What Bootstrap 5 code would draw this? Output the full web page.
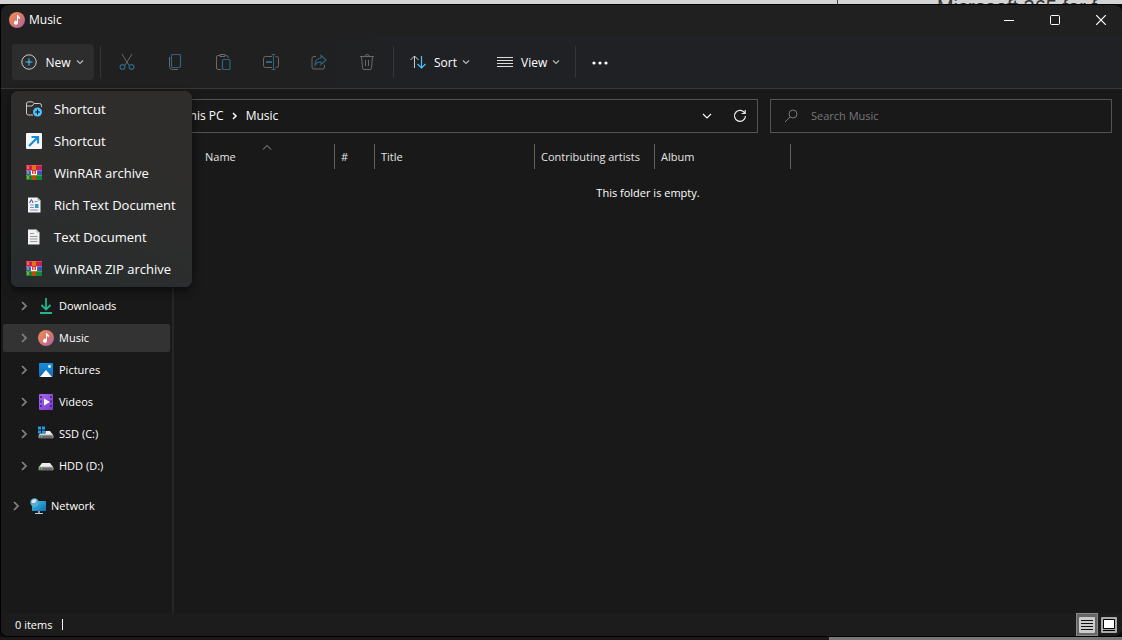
<!DOCTYPE html>
<html lang="en" data-bs-theme="dark">
<head>
<meta charset="utf-8">
<meta name="viewport" content="width=device-width, initial-scale=1">
<title>Music</title>
<link href="https://cdn.jsdelivr.net/npm/bootstrap@5.3.0/dist/css/bootstrap.min.css" rel="stylesheet">
<style>
body{font-family:"Open Sans","Noto Sans",sans-serif;font-size:12px;line-height:16px;color:#fff;background:#0c0b0c}
svg{display:block;flex:none}
button{font-family:inherit}
.desk-top{height:4px;background:#d4d4d4;color:#333;overflow:hidden;padding-right:25px}
.desk-top span{font-family:"Liberation Sans",sans-serif;font-size:20px;line-height:15px;white-space:nowrap}
.desk-top .edge{width:1px;background:#444;margin-right:99px}
.desk-low{height:3px;background:linear-gradient(90deg,#1c1818 0 829px,#777 829px)}
.win{background:#191919;border:1px solid #000;border-right:0;border-radius:8px;overflow:hidden}
.bar-title{height:30px;padding-left:8px;background:#202020}
.tool{height:54px;padding:0 11px;background:linear-gradient(90deg,#202020 25%,#202124 35%);border-bottom:1px solid #3a3739}
.flat{background:none;border:0;color:inherit;padding:0;display:flex;align-items:center;justify-content:center}
.capt{width:42px;height:30px}
.tbtn{height:36px;font-size:12px;font-weight:500;border-radius:4px;color:#fff}
.tbtn span{padding:2px 4px 0 8px}
.tbtn .drop{color:#bbb}
.new-btn{background:#2d2d2d;width:82px}
.sort-btn{margin-left:16px}
.view-btn{margin-left:26px}
.more-btn{margin-left:16px}
.ico-btn{width:48px;height:36px}
.sep-v{width:1px;height:32px;background:#363636}
.sep-a{margin:0 2px 0 6px}
.sep-b{margin-left:2px}
.sep-c{margin-left:14px}
.new-menu{--bs-dropdown-min-width:181px;top:47px;left:-1px;padding:2px 0;border:0;border-radius:7px;background:linear-gradient(200deg,#2e2d2c 30%,#2c2d2d 65%,#272c2e);box-shadow:0 4px 10px #0008;z-index:10}
.new-menu .dropdown-item{height:32px;padding:0 14px;gap:11px;font-size:13px;color:#fff}
.nav-row{padding:10px 10px 0 134px;gap:12px}
.addr{height:34px;border:1px solid #535353;background:#191919}
.crumb{margin-left:47px}
.addr .recent{margin-right:19px}
.addr .reload{margin-right:9px}
.find{flex:0 1 342px}
.find input{background:none;border:0;outline:0;color:#fff;font-size:11px;min-width:0}
.find input::placeholder{color:#777;opacity:1}
.side{width:173px;padding:159px 2px 0 2px;border-right:2px solid #262626;font-size:11px}
.side a{height:28px;color:#fff;text-decoration:none;gap:5px;padding-left:17px;border-radius:2px}
.side .sel{background:#333}
.side .chev{margin-right:5px}
.side .top-lvl{padding-left:9px;margin-top:8px}
.pane{font-size:11px;padding-top:11px}
.cols{table-layout:fixed;width:616px}
.cols th{font-weight:400;padding:0;height:25px;color:#e4e4e4}
.cols span{display:block;height:25px;line-height:25px;padding-left:6px;border-right:1px solid #636363;white-space:nowrap}
.cols .first{padding-left:31px;position:relative}
.cols .first svg{position:absolute;left:88px;top:0}
.stat{height:23px;background:#1c1c1c;font-size:11px;padding:0 2px 0 14px}
.stat .tick{width:1px;height:11px;background:#fff;margin-left:10px}
.vbtn{width:22px;height:23px}
.vbtn.on{background:#666;border:1px solid #888}
</style>
</head>
<body class="vh-100 d-flex flex-column overflow-hidden">
<svg width="0" height="0" class="position-absolute" aria-hidden="true">
<defs>
<linearGradient id="gm" x1="0" y1="0" x2="1" y2="1"><stop offset="0" stop-color="#f09050"/><stop offset=".5" stop-color="#d9776c"/><stop offset="1" stop-color="#a65fb0"/></linearGradient>
<linearGradient id="gp" x1="0" y1="0" x2="0" y2="1"><stop offset="0" stop-color="#1a90dc"/><stop offset="1" stop-color="#0d6bbd"/></linearGradient>
<linearGradient id="gv" x1="0" y1="0" x2="1" y2="1"><stop offset="0" stop-color="#a767ee"/><stop offset="1" stop-color="#7a3bd0"/></linearGradient>
<linearGradient id="gn" x1="0" y1="0" x2="1" y2="1"><stop offset="0" stop-color="#3cc4ee"/><stop offset="1" stop-color="#0e6fae"/></linearGradient>
</defs>
<symbol id="music" viewBox="0 0 16 16"><circle cx="8" cy="8" r="8" fill="url(#gm)"/><path d="M8 3h1q.2 1.300 2 2.200v1.800q-1.200-.300-2-1V10.500A2 2 0 1 1 8 9z" fill="#fff"/></symbol>
<symbol id="down" viewBox="0 0 10 6"><path d="M2 1.500l3 3 3-3" fill="none" stroke="currentColor" stroke-width="1.100"/></symbol>
<symbol id="right" viewBox="0 0 8 10"><path d="M2 1l4 4-4 4" fill="none" stroke="#858585" stroke-width="1.700"/></symbol>
<symbol id="rar" viewBox="0 0 16 16"><path d="M0 1h16v4H0z" fill="#c81f50"/><path d="M0 6h16v4H0z" fill="#4553b5"/><path d="M0 11h16v4H0z" fill="#15852f"/><path d="M0 0h16v1H0z" fill="#e64370"/><path d="M0 5h16v1H0z" fill="#7679d4"/><path d="M0 10h16v1H0z" fill="#35aa45"/><path d="M6 0h4v15H6z" fill="#e8701c"/><path d="M6 11h4v4H6z" fill="#bd4b0d"/><path d="M5 5h6v5H5z" fill="#d62b22"/><path d="M5.500 5.500v4h5v-4M8 6v3" fill="none" stroke="#fff" stroke-width="1.200"/><path d="M2 1v3M2 6v3M2 11v3" stroke="#ffcb3c"/></symbol>
<symbol id="drive" viewBox="0 0 16 16"><path d="M4 5h8l3 4H1z" fill="#ededed"/><path d="M1 9h14v3.500H1z" fill="#6a6a6a"/><path d="M1 9h14M1 9v3M15 9v3" stroke="#bbb" stroke-width=".8"/><path d="M3 10h1.300v1.300H3z" fill="#3be33b"/></symbol>
</svg>

<div class="desk-top d-flex justify-content-end"><div class="edge"></div><span>Microsoft 365 for f</span></div>

<div class="win flex-grow-1 d-flex flex-column">
<header class="bar-title d-flex align-items-center">
  <svg width="16" height="16"><use href="#music"/></svg><span class="ms-1">Music</span>
  <div class="ms-auto d-flex gap-1">
    <button class="flat capt" aria-label="Minimize"><svg width="10" height="10"><path d="M0 5.500h10" stroke="#fff"/></svg></button>
    <button class="flat capt" aria-label="Maximize"><svg width="10" height="10"><rect x=".5" y=".5" width="9" height="9" rx="1" fill="none" stroke="#fff"/></svg></button>
    <button class="flat capt" aria-label="Close"><svg width="10" height="10"><path d="M0 0l10 10M10 0L0 10" stroke="#fff" stroke-width="1.200"/></svg></button>
  </div>
</header>

<div class="tool d-flex align-items-center">
  <div class="dropdown">
    <button class="flat tbtn new-btn" aria-expanded="true"><svg width="16" height="16" fill="none"><circle cx="8" cy="8" r="7.200" stroke="#ccc"/><path d="M8 4.500v7M4.500 8h7" stroke="#4cc2ff" stroke-width="1.100"/></svg><span>New</span><svg class="drop" width="10" height="6"><use href="#down"/></svg></button>
    <ul class="dropdown-menu new-menu show">
      <li><a class="dropdown-item d-flex align-items-center" href="#"><svg width="18" height="16" viewBox="0 0 18 16"><path d="M16.500 6V4.500a2 2 0 0 0-2-2H9L7.500.800H3.500A2 2 0 0 0 1.500 3v9a2 2 0 0 0 2 2h4.500M1.500 5H7L9 2.600" fill="none" stroke="#ccc"/><circle cx="12.500" cy="11" r="4.500" fill="#4cc2ff"/><path d="M12.500 8.500v5M10 11h5" stroke="#111" stroke-width="1.100"/></svg>Shortcut</a></li>
      <li><a class="dropdown-item d-flex align-items-center" href="#"><svg width="18" height="16" viewBox="-1 0 18 16"><rect width="16" height="16" rx="1" fill="#f5f6f8"/><path d="M3 13L11.500 4.500M5.500 4H12v6.500" fill="none" stroke="#168bd8" stroke-width="2.200"/></svg>Shortcut</a></li>
      <li><a class="dropdown-item d-flex align-items-center" href="#"><svg width="18" height="16"><use href="#rar" x="1" width="16" height="16"/></svg>WinRAR archive</a></li>
      <li><a class="dropdown-item d-flex align-items-center" href="#"><svg width="18" height="16"><path d="M3 .500h9.500l3 3v12H3z" fill="#f2f2f2"/><path d="M12.500 .500v3h3z" fill="#aaa"/><path d="M4.500 6l2-3.500L8 6" fill="none" stroke="#3d45b8"/><path d="M9.500 4.500h3M5 8h4M5 10.500h4M5 13h8" stroke="#8694b5"/><path d="M10 7h3.500v4H10z" fill="#319bc0"/></svg>Rich Text Document</a></li>
      <li><a class="dropdown-item d-flex align-items-center" href="#"><svg width="18" height="16"><path d="M3 .500h8.500l3 3v12H3z" fill="#f2f2f2"/><path d="M11.500 .500v3h3z" fill="#aaa"/><path d="M5 4.500h4M5 7.500h7.500M5 10h7.500M5 12.500h7.500" stroke="#999"/></svg>Text Document</a></li>
      <li><a class="dropdown-item d-flex align-items-center" href="#"><svg width="18" height="16"><use href="#rar" x="1" width="16" height="16"/></svg>WinRAR ZIP archive</a></li>
    </ul>
  </div>
  <div class="sep-v sep-a"></div>
  <div class="d-flex">
    <button class="flat ico-btn" aria-label="Cut"><svg width="16" height="16" fill="none" stroke="#696969"><path d="M3 0l6.800 11M13 0L6.200 11"/><g stroke="#2d6480" stroke-width="1.300"><circle cx="3.500" cy="13" r="2.400"/><circle cx="12.500" cy="13" r="2.400"/></g></svg></button>
    <button class="flat ico-btn" aria-label="Copy"><svg width="16" height="16" fill="none"><path d="M2.500 3v9.500a3 3 0 0 0 3 3H11" stroke="#696969"/><rect x="4.500" y=".5" width="9" height="13" rx="1.500" stroke="#2d6480" stroke-width="1.200"/></svg></button>
    <button class="flat ico-btn" aria-label="Paste"><svg width="16" height="16" fill="none"><path d="M6 15.500H3a1.500 1.500 0 0 1-1.500-1.500V3A1.500 1.500 0 0 1 3 1.500h2M10 1.500h1.500A1.500 1.500 0 0 1 13 3v1M5 .500h5v2H5z" stroke="#696969"/><rect x="7.500" y="5.500" width="7.500" height="10" rx="1" stroke="#2d6480" stroke-width="1.200"/></svg></button>
    <button class="flat ico-btn" aria-label="Rename"><svg width="16" height="16" fill="none"><path d="M9 13.500H2.500A2 2 0 0 1 .5 11.500V4.500a2 2 0 0 1 2-2H9M12.500 2.500H13.500a2 2 0 0 1 2 2v7a2 2 0 0 1-2 2h-1" stroke="#696969"/><path d="M8.500.500h4M10.500.500v15M8.500 15.500h4" stroke="#2d6480"/><path d="M3 8h6" stroke="#2d6480" stroke-width="2"/></svg></button>
    <button class="flat ico-btn" aria-label="Share"><svg width="16" height="16" fill="none"><path d="M5 2.500H3a2 2 0 0 0-2 2V13a2 2 0 0 0 2 2h8.500a2 2 0 0 0 2-2v-2" stroke="#696969"/><path d="M10 1.500l5 4.500-5 4.500V8Q6 7.500 4 11q0-6.500 6-7z" stroke="#2d6480" stroke-width="1.100"/></svg></button>
    <button class="flat ico-btn" aria-label="Delete"><svg width="16" height="16" fill="none" stroke="#696969"><path d="M1 2.500h14M6 2.500a2 2 0 0 1 4 0M2.500 2.500l1 11.500a1.500 1.500 0 0 0 1.500 1.500h6a1.500 1.500 0 0 0 1.500-1.500l1-11.500M6.500 6v6M9.500 6v6"/></svg></button>
  </div>
  <div class="sep-v sep-b"></div>
  <button class="flat tbtn sort-btn"><svg width="16" height="16" fill="none"><path d="M4.500 14V2M.500 6l4-4 4 4" stroke="#ccc"/><path d="M11.500 2v12M7.500 10l4 4 4-4" stroke="#4cc2ff" stroke-width="1.200"/></svg><span>Sort</span><svg class="drop" width="10" height="6"><use href="#down"/></svg></button>
  <button class="flat tbtn view-btn"><svg width="16" height="16"><path d="M0 3.500h16M0 6.500h16M0 9.500h16M0 12.500h16" stroke="#ddd"/></svg><span>View</span><svg class="drop" width="10" height="6"><use href="#down"/></svg></button>
  <div class="sep-v sep-c"></div>
  <button class="flat tbtn more-btn" aria-label="See more"><svg width="16" height="16" fill="#fff"><circle cx="2" cy="9" r="1.600"/><circle cx="8" cy="9" r="1.600"/><circle cx="14" cy="9" r="1.600"/></svg></button>
</div>

<div class="flex-grow-1 d-flex flex-column">
  <div class="nav-row d-flex">
    <nav class="addr flex-grow-1 d-flex align-items-center" aria-label="Path">
      <a class="crumb text-white text-decoration-none" href="#">This PC</a>
      <svg class="mx-2" width="6" height="8" viewBox="0 0 6 8"><path d="M1 1l3 3-3 3" fill="none" stroke="#fff" stroke-width="1.500"/></svg>
      <a class="text-white text-decoration-none" href="#">Music</a>
      <button class="flat recent ms-auto" aria-label="Recent locations"><svg width="12" height="8" viewBox="0 0 12 8"><path d="M2 2l4 4 4-4" fill="none" stroke="#fff" stroke-width="1.100"/></svg></button>
      <button class="flat reload" aria-label="Refresh"><svg width="16" height="16" viewBox="0 0 16 16" fill="none" stroke="#e8e8e8" stroke-width="1.200"><path d="M13 5.500A5.500 5.500 0 1 0 13.500 8M13.200 2v3.500H9.700"/></svg></button>
    </nav>
    <label class="addr find d-flex align-items-center"><svg class="mx-2" width="24" height="14" viewBox="-4 0 24 14"><circle cx="10" cy="5" r="4" fill="none" stroke="#777"/><path d="M7 8l-5 5" stroke="#777"/></svg><input class="flex-grow-1 p-0" type="text" placeholder="Search Music" aria-label="Search Music"></label>
  </div>
  <div class="flex-grow-1 d-flex">
    <nav class="side flex-shrink-0 d-flex flex-column gap-1" aria-label="Folders">
      <a class="d-flex align-items-center" href="#"><svg class="chev" width="8" height="10"><use href="#right"/></svg><svg width="16" height="16" fill="none" stroke="#22b58b" stroke-width="1.800"><path d="M8 0v11M3.500 7L8 11.500 12.500 7M2 15h12"/></svg>Downloads</a>
      <a class="d-flex align-items-center sel" href="#"><svg class="chev" width="8" height="10"><use href="#right"/></svg><svg width="16" height="16"><use href="#music"/></svg>Music</a>
      <a class="d-flex align-items-center" href="#"><svg class="chev" width="8" height="10"><use href="#right"/></svg><svg width="16" height="16"><rect x="1" y="1" width="14" height="14" rx="1" fill="url(#gp)"/><path d="M2 15l6-7 6 7z" fill="#fff"/><circle cx="11.500" cy="4.500" r="1.400" fill="#fff"/></svg>Pictures</a>
      <a class="d-flex align-items-center" href="#"><svg class="chev" width="8" height="10"><use href="#right"/></svg><svg width="16" height="16"><rect x="1" width="14" height="16" rx="1" fill="url(#gv)"/><path d="M3 2v13M13 2v13" stroke="#40207a" stroke-width="1.600" stroke-dasharray="2 2.500"/><path d="M6 4.500l6 3.500-6 3.500z" fill="#fff"/></svg>Videos</a>
      <a class="d-flex align-items-center" href="#"><svg class="chev" width="8" height="10"><use href="#right"/></svg><svg width="16" height="16"><use href="#drive"/><path d="M0 0h7.500v7.500H0z" fill="#191919"/><path d="M0 .500h3v3H0zM4 .500h3v3H4zM0 4.500h3v3H0zM4 4.500h3v3H4z" fill="#1c9cec"/></svg>SSD (C:)</a>
      <a class="d-flex align-items-center" href="#"><svg class="chev" width="8" height="10"><use href="#right"/></svg><svg width="16" height="16"><use href="#drive"/></svg>HDD (D:)</a>
      <a class="d-flex align-items-center top-lvl" href="#"><svg class="chev" width="8" height="10"><use href="#right"/></svg><svg width="16" height="16"><path d="M2 3h14v10H2z" fill="url(#gn)"/><path d="M8 13h2v2H8z" fill="#8795a0"/><path d="M5 15.500h8" stroke="#c6d0d8"/><circle cx="4.500" cy="4.500" r="4.200" fill="#62a9cf"/><path d="M1.500 3Q4 0 6.500 2L5 5 2 5z" fill="#d5eef8"/></svg>Network</a>
    </nav>
    <main class="pane flex-grow-1 overflow-hidden">
      <table class="cols">
        <colgroup><col style="width:161px"><col style="width:40px"><col style="width:160px"><col style="width:120px"><col style="width:136px"></colgroup>
        <thead><tr><th scope="col"><span class="first">Name<svg width="10" height="8"><path d="M1 5.500l4-4 4 4" fill="none" stroke="#999"/></svg></span></th><th scope="col"><span>#</span></th><th scope="col"><span>Title</span></th><th scope="col"><span>Contributing artists</span></th><th scope="col"><span>Album</span></th></tr></thead>
      </table>
      <p class="text-center mb-0 pt-3">This folder is empty.</p>
    </main>
  </div>
</div>

<footer class="stat d-flex align-items-center">
  <span>0 items</span><div class="tick"></div>
  <button class="flat vbtn on ms-auto" aria-label="Details view"><svg width="16" height="16"><rect width="16" height="16" rx="1" fill="#ccc"/><path d="M2 3.500h12M2 6.500h12M2 9.500h12M2 12.500h12" stroke="#111"/></svg></button>
  <button class="flat vbtn" aria-label="Large icons view"><svg width="16" height="16"><rect width="16" height="16" rx="1" fill="#aaa"/><path d="M2.500 2.500h11v9h-11z" fill="#fff" stroke="#000"/><path d="M2 13.500h12" stroke="#000"/></svg></button>
</footer>
</div>
<div class="desk-low"></div>
<script src="https://cdn.jsdelivr.net/npm/bootstrap@5.3.0/dist/js/bootstrap.bundle.min.js"></script>
</body>
</html>
